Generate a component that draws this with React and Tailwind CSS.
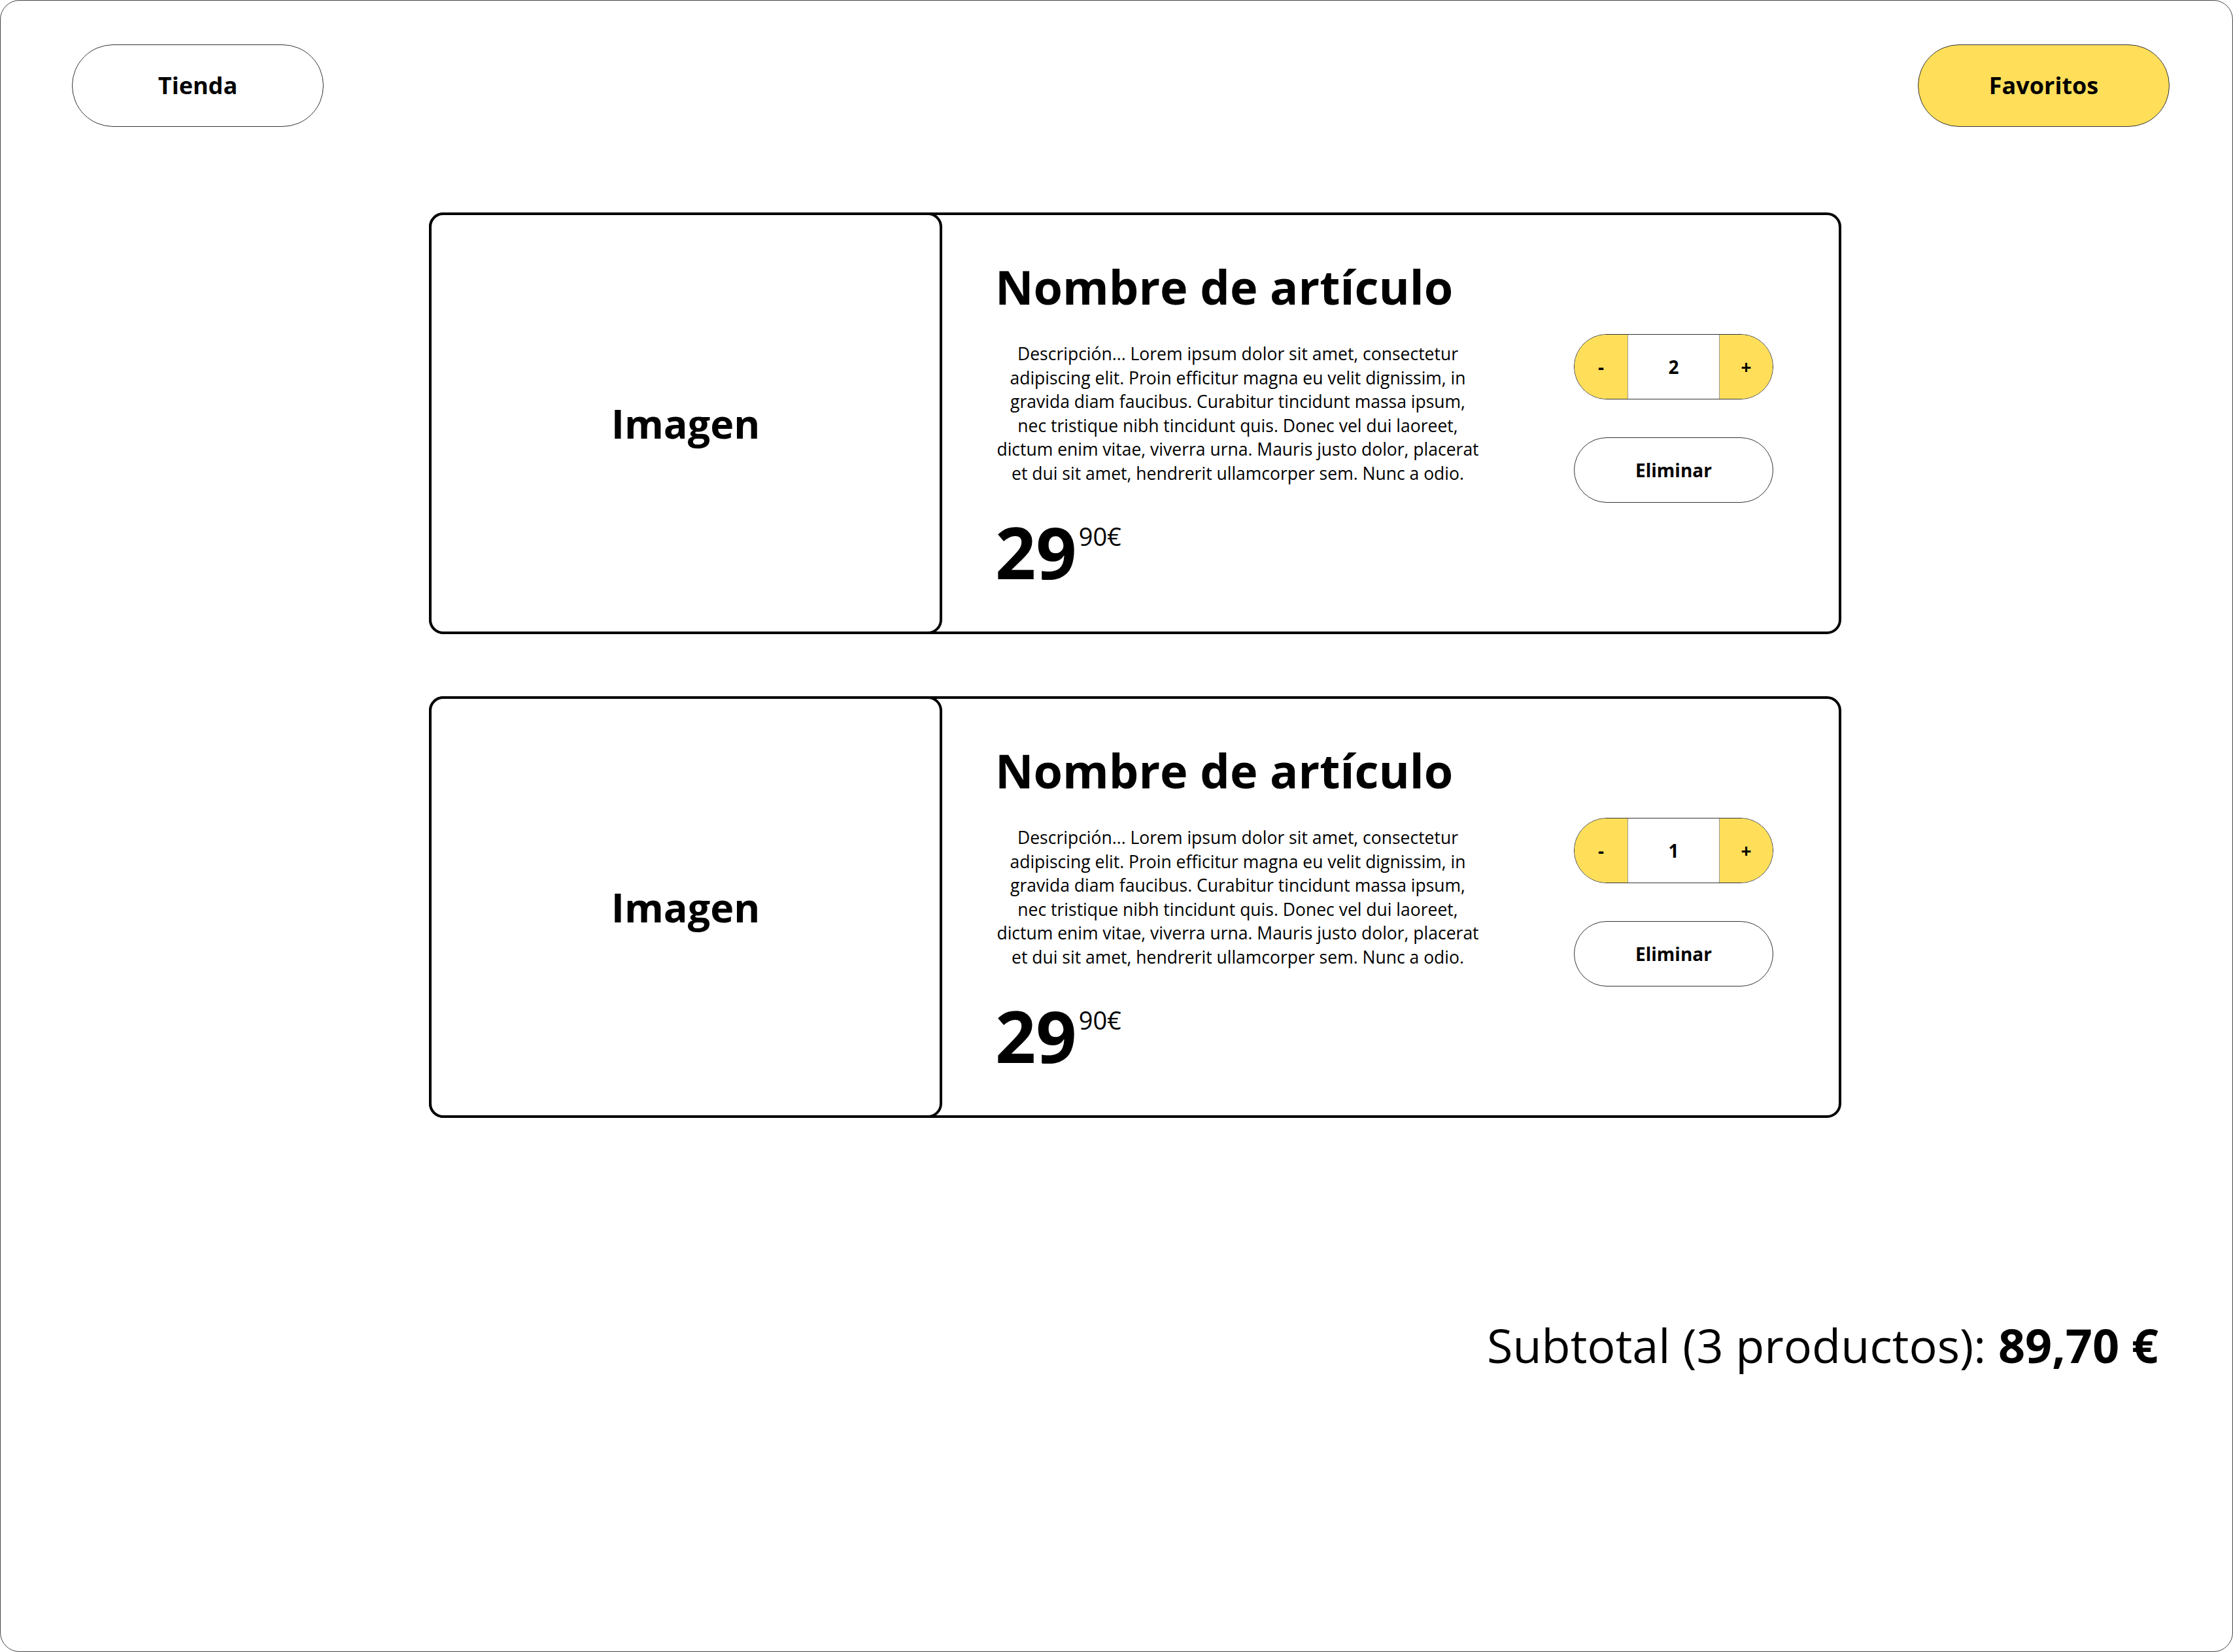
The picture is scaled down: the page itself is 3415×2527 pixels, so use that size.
import { useState } from "react";

const items = [
  { id: 1, name: "Nombre de artículo", qty: 2, euros: "29", cents: "90€" },
  { id: 2, name: "Nombre de artículo", qty: 1, euros: "29", cents: "90€" },
];

const description =
  "Descripción... Lorem ipsum dolor sit amet, consectetur adipiscing elit. Proin efficitur magna eu velit dignissim, in gravida diam faucibus. Curabitur tincidunt massa ipsum, nec tristique nibh tincidunt quis. Donec vel dui laoreet, dictum enim vitae, viverra urna. Mauris justo dolor, placerat et dui sit amet, hendrerit ullamcorper sem. Nunc a odio.";

function CartItem({ item }) {
  const [qty, setQty] = useState(item.qty);

  return (
    <div className="flex h-[645px] w-[2160px] rounded-[22px] border-4 border-black">
      {/* Image placeholder */}
      <div className="-my-[4px] -ml-[4px] flex w-[785px] shrink-0 items-center justify-center rounded-[22px] border-4 border-black bg-white">
        <span className="text-[61px] font-bold leading-none">Imagen</span>
      </div>

      {/* Info */}
      <div className="ml-[81px] flex w-[742px] flex-col pt-[73px]">
        <h2 className="whitespace-nowrap text-[72px] font-bold leading-none">{item.name}</h2>
        <p className="mt-[49px] text-center text-[26.5px] leading-[36.5px]">{description}</p>
        <div className="mt-[47px] flex items-start">
          <span className="text-[109px] font-bold leading-none">{item.euros}</span>
          <span className="ml-[3px] mt-[12px] text-[38px] leading-none">{item.cents}</span>
        </div>
      </div>

      {/* Actions */}
      <div className="ml-[143px] flex w-[305px] flex-col pt-[182px]">
        <div className="flex h-[100px] overflow-hidden rounded-full border border-[#333]">
          <button
            onClick={() => setQty(Math.max(1, qty - 1))}
            className="flex w-[82px] items-center justify-center border-r border-[#999] bg-[#ffde59] text-[28px] font-bold"
          >
            -
          </button>
          <div className="flex flex-1 items-center justify-center bg-white text-[28px] font-bold">
            {qty}
          </div>
          <button
            onClick={() => setQty(qty + 1)}
            className="flex w-[82px] items-center justify-center border-l border-[#999] bg-[#ffde59] text-[28px] font-bold"
          >
            +
          </button>
        </div>
        <button className="mt-[58px] flex h-[100px] items-center justify-center rounded-full border border-[#333] bg-white text-[28px] font-bold">
          Eliminar
        </button>
      </div>
    </div>
  );
}

export default function App() {
  return (
    <div className="h-[2527px] w-full bg-white font-['Open_Sans',sans-serif] text-black">
      <div className="h-full rounded-[30px] border border-[#444]">
        <header className="flex items-center justify-between pl-[109px] pr-[96px] pt-[67px]">
          <button className="flex h-[126px] w-[385px] items-center justify-center rounded-full border border-[#333] bg-white text-[36px] font-bold">
            Tienda
          </button>
          <button className="flex h-[126px] w-[385px] items-center justify-center rounded-full border border-[#333] bg-[#ffde59] text-[36px] font-bold">
            Favoritos
          </button>
        </header>

        <main className="ml-[655px] mt-[131px] flex flex-col gap-[95px]">
          {items.map((item) => (
            <CartItem key={item.id} item={item} />
          ))}
        </main>

        <div className="mt-[311px] flex justify-end pr-[113px]">
          <p className="text-[72px] leading-none">
            Subtotal (3 productos): <span className="font-bold">89,70 €</span>
          </p>
        </div>
      </div>
    </div>
  );
}
